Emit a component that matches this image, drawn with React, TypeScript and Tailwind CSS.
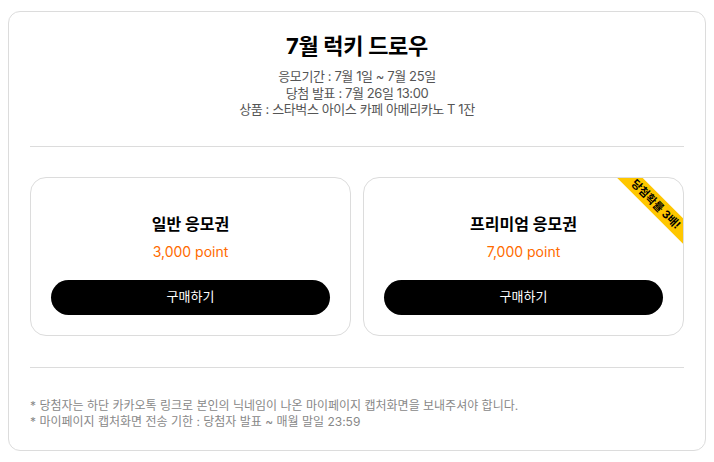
import React from "react";

const tickets = [
  { name: "일반 응모권", point: "3,000 point", badge: false },
  { name: "프리미엄 응모권", point: "7,000 point", badge: true },
];

const App = () => {
  return (
    <div
      className="min-h-screen bg-white px-2 pt-[11px]"
      style={{ fontFamily: '"Inter", "Noto Sans CJK KR", sans-serif' }}
    >
      <div className="rounded-xl border border-[#dcdcdc] px-[21px] pt-5 pb-5">
        <div className="text-center">
          <h1 className="text-[22px] font-bold leading-7 tracking-[-0.3px] text-black">7월 럭키 드로우</h1>
          <div className="mt-2 text-[13px] leading-[16.5px] tracking-[-0.4px] text-[#555]">
            <p>응모기간 : 7월 1일 ~ 7월 25일</p>
            <p>당첨 발표 : 7월 26일 13:00</p>
            <p>상품 : 스타벅스 아이스 카페 아메리카노 T 1잔</p>
          </div>
        </div>

        <div className="mt-[28px] mb-[30px] h-px bg-[#dcdcdc]" />

        <div className="grid grid-cols-2 gap-3">
          {tickets.map((t) => (
            <div
              key={t.name}
              className="relative overflow-hidden rounded-2xl border border-[#dcdcdc] px-5 pt-[34px] pb-5 text-center"
            >
              {t.badge && (
                <div className="absolute top-[17px] right-[-33px] h-[18px] w-[120px] rotate-45 bg-[#ffc700] text-center text-[11px] font-bold leading-[18px] text-black">
                  당첨확률 3배!
                </div>
              )}
              <h2 className="text-[16px] font-bold leading-6 text-black">{t.name}</h2>
              <p className="mt-1.5 text-[14px] leading-5 text-[#ff6b00]">{t.point}</p>
              <button className="mt-[18px] h-[35px] w-full rounded-full bg-black text-[13px] text-white">
                구매하기
              </button>
            </div>
          ))}
        </div>

        <div className="mt-[31px] mb-[30px] h-px bg-[#dcdcdc]" />

        <div className="text-[12px] leading-4 text-[#888]">
          <p>* 당첨자는 하단 카카오톡 링크로 본인의 닉네임이 나온 마이페이지 캡처화면을 보내주셔야 합니다.</p>
          <p>* 마이페이지 캡처화면 전송 기한 : 당첨자 발표 ~ 매월 말일 23:59</p>
        </div>
      </div>
    </div>
  );
};

export default App;
